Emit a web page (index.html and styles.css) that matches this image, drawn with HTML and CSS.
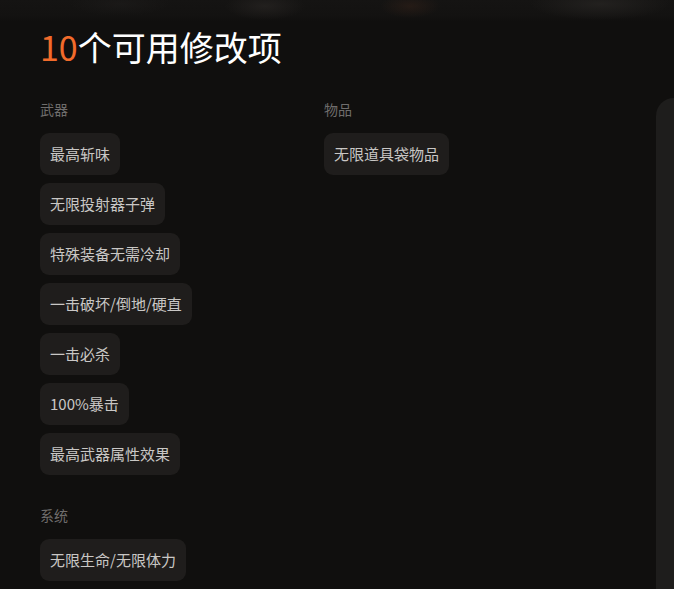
FILE: index.html
```html
<!DOCTYPE html>
<html lang="zh-CN">
<head>
<meta charset="utf-8">
<title>可用修改项</title>
<link rel="stylesheet" href="styles.css">
</head>
<body>
  <div class="hero-strip"></div>
  <main class="layout">
    <section class="mods">
      <h1 class="title"><span class="count">10</span>个可用修改项</h1>
      <div class="groups">
        <div class="group">
          <h2 class="group-label">武器</h2>
          <ul class="chips">
            <li class="chip">最高斩味</li>
            <li class="chip">无限投射器子弹</li>
            <li class="chip">特殊装备无需冷却</li>
            <li class="chip">一击破坏/倒地/硬直</li>
            <li class="chip">一击必杀</li>
            <li class="chip">100%暴击</li>
            <li class="chip">最高武器属性效果</li>
          </ul>
        </div>
        <div class="group">
          <h2 class="group-label">物品</h2>
          <ul class="chips">
            <li class="chip">无限道具袋物品</li>
          </ul>
        </div>
        <div class="group">
          <h2 class="group-label">系统</h2>
          <ul class="chips">
            <li class="chip">无限生命/无限体力</li>
            <li class="chip">无限金钱</li>
          </ul>
        </div>
      </div>
    </section>
    <aside class="side-panel"></aside>
  </main>
</body>
</html>
```

FILE: styles.css
```css
html, body {
  margin: 0;
  padding: 0;
  background: #100f0e;
  color: #fff;
  font-family: "Noto Sans CJK SC", "Noto Sans", sans-serif;
  height: 100%;
  overflow: hidden;
}

/* blurred banner artwork fading into the page */
.hero-strip {
  height: 22px;
  background:
    radial-gradient(ellipse 40px 14px at 265px 6px, rgba(40, 37, 35, 0.7), transparent),
    radial-gradient(ellipse 30px 12px at 410px 6px, rgba(48, 32, 24, 0.6), transparent),
    radial-gradient(ellipse 70px 16px at 600px 4px, rgba(38, 36, 34, 0.8), transparent),
    radial-gradient(ellipse 50px 12px at 120px 4px, rgba(30, 28, 27, 0.6), transparent),
    linear-gradient(to bottom, #151413 0%, #131211 70%, #100f0e 100%);
}

.layout {
  display: flex;
  align-items: flex-start;
}

.mods {
  flex: 0 0 616px;
  padding-left: 40px;
}

.title {
  margin: 4px 0 0;
  font-size: 34px;
  line-height: 41px;
  font-weight: 400;
  color: #fff;
}

.count {
  color: #f26b2b;
}

.groups {
  margin-top: 32px;
  display: grid;
  grid-template-columns: 268px 268px;
  column-gap: 16px;
  row-gap: 30px;
  align-items: start;
}

.group-label {
  margin: 0 0 14px;
  font-size: 14px;
  line-height: 20px;
  font-weight: 400;
  color: #6f6d6c;
}

.chips {
  list-style: none;
  margin: 0;
  padding: 0;
  display: flex;
  flex-direction: column;
  align-items: flex-start;
  gap: 8px;
}

.chip {
  background: #1f1d1c;
  border-radius: 9px;
  padding: 10px 10px;
  font-size: 15px;
  line-height: 22px;
  color: #c9c7c5;
  white-space: nowrap;
}

.side-panel {
  flex: 1;
  margin-top: 76px;
  height: 600px;
  background: #1e1d1c;
  border-top-left-radius: 20px;
}
```
